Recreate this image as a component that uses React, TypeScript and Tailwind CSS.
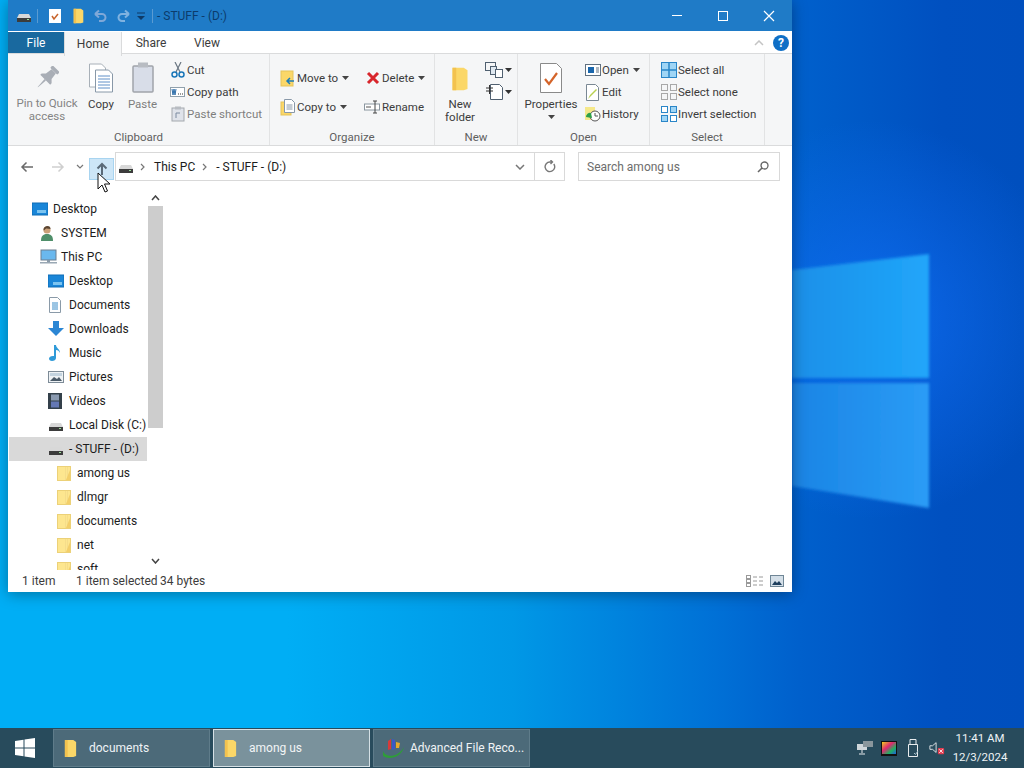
import React from "react";

const Folder = ({ s = 16 }: { s?: number }) => (
  <svg width={s} height={s} viewBox="0 0 16 16" className="shrink-0">
    <rect x="1.500" y="1.500" width="13" height="14" fill="#fde68f" stroke="#ecd178" />
    <path d="M9.500 2v13M11.500 2v13" stroke="#f0d88a" strokeWidth=".7" />
    <path d="M14 5v10h-4z" fill="#f3cf6a" />
  </svg>
);
const TallFolder = ({ w = 16, h = 20 }: { w?: number; h?: number }) => (
  <svg width={w} height={h} viewBox="0 0 16 20" className="shrink-0">
    <path d="M2 1h9l3 2v15l-3 1H2z" fill="#fbd768" />
    <path d="M2 1h3v18H2z" fill="#f3c24f" />
  </svg>
);
const Drive = () => (
  <svg width="16" height="16" viewBox="0 0 16 16" className="shrink-0">
    <path d="M3 6h10l2 4H1z" fill="#d8d8d8" />
    <rect x="1" y="10" width="14" height="4" fill="#3c3c3c" />
    <rect x="11" y="11" width="2" height="1" fill="#9be09b" />
  </svg>
);
const Monitor = () => (
  <svg width="16" height="16" viewBox="0 0 16 16" className="shrink-0">
    <rect x="0" y="2" width="16" height="12" fill="#1a86d8" />
    <rect x="0" y="2" width="16" height="12" fill="none" stroke="#0f6cb5" />
    <rect x="5" y="9" width="9" height="3" fill="#7cc4f0" />
  </svg>
);
const PC = () => (
  <svg width="18" height="16" viewBox="0 0 18 16" className="shrink-0">
    <rect x="1" y="1" width="15" height="10" fill="#6ab8ee" stroke="#6c7f90" />
    <rect x="7" y="11" width="3" height="2" fill="#8a9aa8" />
    <rect x="0" y="13" width="17" height="1.500" fill="#9aa8b4" />
  </svg>
);
const User = () => (
  <svg width="14" height="16" viewBox="0 0 14 16" className="shrink-0">
    <circle cx="7" cy="5" r="3.600" fill="#caa078" />
    <path d="M1 16c0-5 2-7 6-7s6 2 6 7z" fill="#4f8f6a" />
    <path d="M3.500 5c0-3 2-4 4-4 2 0 3 1 3 3-2 0-4-1-5 0-.5.5-1.500 2-2 1z" fill="#5b4632" />
  </svg>
);
const DocIcon = () => (
  <svg width="14" height="16" viewBox="0 0 14 16" className="shrink-0">
    <path d="M1.500.5h8l3 3v12h-11z" fill="#fff" stroke="#8a9aa8" />
    <path d="M4 6h6M4 8h6M4 10h6M4 12h6" stroke="#3a8cc8" />
  </svg>
);
const Down = () => (
  <svg width="16" height="16" viewBox="0 0 16 16" className="shrink-0">
    <path d="M5 0h6v7h5l-8 8-8-8h5z" fill="#2b86d4" />
  </svg>
);
const Music = () => (
  <svg width="14" height="16" viewBox="0 0 14 16" className="shrink-0">
    <path d="M6 0h2c0 3 4 4 4 8-1-2-2-3-4-3v8c0 2-2 3-4 3s-3-1-3-2.500 2-3 5-2.500z" fill="#2f9ad8" />
  </svg>
);
const Pic = () => (
  <svg width="16" height="14" viewBox="0 0 16 14" className="shrink-0">
    <rect x=".5" y="1.500" width="15" height="11" fill="#eef2f5" stroke="#7d8b97" />
    <path d="M2 11l4-4 3 2 2-2 3 4z" fill="#4a5a68" />
    <rect x="2" y="3" width="12" height="3" fill="#c3d3df" />
  </svg>
);
const Film = () => (
  <svg width="14" height="16" viewBox="0 0 14 16" className="shrink-0">
    <rect x="0" y="0" width="14" height="16" fill="#33404a" />
    <rect x="3" y="1.500" width="8" height="6" fill="#8a9ab0" />
    <rect x="3" y="8.500" width="8" height="6" fill="#6478b4" />
  </svg>
);

const Tree = ({ indent, icon, label, sel }: { indent: string; icon: React.ReactNode; label: string; sel?: boolean }) => (
  <div className={`flex items-center h-6 shrink-0 ${indent} ${sel ? "bg-[#d9d9d9]" : ""}`}>
    <span className="w-[21px] flex items-center shrink-0">{icon}</span>
    <span className="text-[#1c1c1c] whitespace-nowrap">{label}</span>
  </div>
);

const Caret = ({ c = "#444" }: { c?: string }) => (
  <svg width="7" height="4" viewBox="0 0 7 4" className="inline-block shrink-0">
    <path d="M0 0h7L3.500 4z" fill={c} />
  </svg>
);

const Group = ({ w, label, children }: { w: string; label: string; children: React.ReactNode }) => (
  <div className={`${w} flex flex-col shrink-0 h-full border-r border-[#e2e3e4]`}>
    <div className="flex-1 flex min-h-0">{children}</div>
    <div className="h-[14px] mb-[1px] leading-[14px] text-center text-[#5f5f5f]">{label}</div>
  </div>
);

const Small = ({ icon, label, dim, caret }: { icon: React.ReactNode; label: string; dim?: boolean; caret?: boolean }) => (
  <div className="flex items-center h-[22px] whitespace-nowrap">
    <span className="w-[17px] flex justify-center shrink-0 mr-[1px]">{icon}</span>
    <span className={dim ? "text-[#7e7e7e]" : "text-[#3c3c3c]"}>{label}</span>
    {caret && <span className="ml-[4px] flex"><Caret /></span>}
  </div>
);

export default function App() {
  return (
    <div className="relative w-[1024px] h-[768px] overflow-hidden bg-[radial-gradient(circle_at_870px_320px,rgba(16,110,245,0.8)_0px,rgba(16,110,245,0)_200px),linear-gradient(90deg,#00aef5_0%,#00aef5_28%,#0098e6_50%,#0070d6_70%,#0060cc_78%,#0050c0_92%,#004fbe_100%)] font-['Roboto','Liberation_Sans',sans-serif] text-[12px] leading-[14px]">
      {/* wallpaper light */}
      <svg className="absolute left-[792px] top-[240px]" width="160" height="280" viewBox="0 0 160 280">
        <defs>
          <filter id="bl"><feGaussianBlur stdDeviation="1.500" /></filter>
          <linearGradient id="pa" x1="0" y1="0" x2="1" y2="0"><stop offset="0" stopColor="#1c8fe8" /><stop offset="1" stopColor="#20a6fa" /></linearGradient>
          <linearGradient id="pb" x1="0" y1="0" x2="1" y2="0"><stop offset="0" stopColor="#1a84e4" /><stop offset="1" stopColor="#2a9cf6" /></linearGradient>
        </defs>
        <g filter="url(#bl)">
          <path d="M0 30L137 14V138H0z" fill="url(#pa)" />
          <path d="M0 143H137V268L0 246z" fill="url(#pb)" />
        </g>
      </svg>

      {/* window */}
      <div className="absolute left-2 top-0 w-[784px] h-[592px] flex flex-col bg-white shadow-[0_2px_14px_rgba(0,0,0,0.35)]">
        {/* title bar */}
        <div className="h-[31px] bg-[#1f7bc7] flex items-center shrink-0 pl-2 relative">
          <Drive />
          <div className="w-px h-[14px] bg-[#5a9bd2] ml-[5px]" />
          <svg width="14" height="16" viewBox="0 0 14 16" className="ml-[10px]">
            <path d="M1 1h12v14H1z" fill="#fff" />
            <path d="M4 8l2 3 4-5" fill="none" stroke="#c8642c" strokeWidth="1.500" />
          </svg>
          <span className="ml-[10px]"><TallFolder w={13} h={16} /></span>
          <svg width="16" height="14" viewBox="0 0 16 14" className="ml-[7px]">
            <path d="M3 5h7a3.500 3.500 0 010 7H7M3 5l4-3.500M3 5l4 3.500" fill="none" stroke="#7fa8d8" strokeWidth="2" />
          </svg>
          <svg width="16" height="14" viewBox="0 0 16 14" className="ml-[8px]">
            <path d="M13 5H6a3.500 3.500 0 000 7h3M13 5L9 1.500M13 5L9 8.500" fill="none" stroke="#7fb2e0" strokeWidth="2" />
          </svg>
          <svg width="10" height="10" viewBox="0 0 10 10" className="ml-[4px]">
            <path d="M1 2h8" stroke="#0f3a66" />
            <path d="M1 5h8L5 9z" fill="#0f3a66" />
          </svg>
          <div className="w-px h-[14px] bg-[#5a9bd2] ml-[6px]" />
          <span className="ml-[4px] text-[#0c3c6c] leading-none">- STUFF - (D:)</span>
          <div className="ml-auto flex items-center h-full">
            <div className="w-[46px] flex justify-center"><div className="w-[10px] h-px bg-white" /></div>
            <div className="w-[46px] flex justify-center"><div className="w-[10px] h-[10px] border border-white" /></div>
            <div className="w-[46px] flex justify-center">
              <svg width="12" height="12" viewBox="0 0 12 12"><path d="M1 1l10 10M11 1L1 11" stroke="#fff" strokeWidth="1.200" /></svg>
            </div>
          </div>
        </div>
        {/* tabs */}
        <div className="h-[23px] flex items-center shrink-0 border-b border-[#dadbdc] relative pt-[1px]">
          <div className="w-[56px] h-full bg-[#19699f] text-white flex items-center justify-center">File</div>
          <div className="w-[58px] h-[24px] bg-[#f5f6f7] border-x border-[#dadbdc] text-[#3c3c3c] flex items-center justify-center relative top-[1px]">Home</div>
          <div className="w-[58px] text-center text-[#3c3c3c]">Share</div>
          <div className="w-[54px] text-center text-[#3c3c3c]">View</div>
          <div className="ml-auto flex items-center pr-[3px] gap-[9px]">
            <svg width="10" height="6" viewBox="0 0 10 6"><path d="M1 5l4-4 4 4" fill="none" stroke="#c4c4c4" strokeWidth="1.500" /></svg>
            <div className="w-4 h-4 rounded-full bg-[#0f6fc6] text-white font-bold text-[12px] flex items-center justify-center">?</div>
          </div>
        </div>
        {/* ribbon */}
        <div className="h-[92px] bg-[#f5f6f7] border-b border-[#dadbdc] flex shrink-0 text-[11.5px] leading-[13px]">
          <Group w="w-[262px]" label="Clipboard">
            <div className="w-[78px] flex flex-col items-center pt-[12px] text-[#848484] text-center">
              <svg width="24" height="24" viewBox="0 0 24 24" className="mb-[4px]">
                <g transform="rotate(45 12 12)" fill="#a9aeb6">
                  <rect x="7" y="-1" width="10" height="3.500" rx="1" />
                  <path d="M9 2.500h6l1 7 3 3v2H5v-2l3-3z" />
                  <path d="M11 14.500h2L12.200 25h-.4z" />
                </g>
              </svg>
              <div className="mt-[3px] leading-[13px] whitespace-nowrap">Pin to Quick<br />access</div>
            </div>
            <div className="w-[30px] flex flex-col items-center pt-[9px] text-[#3c3c3c]">
              <svg width="26" height="30" viewBox="0 0 26 30">
                <path d="M1.500 1h12l4 4v19h-16z" fill="#fff" stroke="#a8b0b8" />
                <path d="M7.500 7h13l4 4v18h-17z" fill="#fff" stroke="#8898a8" />
                <path d="M10 13h12M10 16h12M10 19h12M10 22h12M10 25h12" stroke="#6090c8" />
              </svg>
              <div className="mt-[5px]">Copy</div>
            </div>
            <div className="w-[53px] flex flex-col items-center pt-[8px] text-[#7e7e7e]">
              <svg width="22" height="31" viewBox="0 0 22 31">
                <rect x="1" y="4" width="20" height="26" rx="1" fill="#d8dde8" stroke="#a0a4aa" strokeWidth="1.500" />
                <rect x="6" y="0.500" width="10" height="5" fill="#b8bcc2" />
              </svg>
              <div className="mt-[5px]">Paste</div>
            </div>
            <div className="flex flex-col pt-[5px]">
              <Small label="Cut" icon={<svg width="14" height="16" viewBox="0 0 14 16"><path d="M10 0L5 10M4 0l5 10" stroke="#6a7682" strokeWidth="1.200" /><circle cx="3.500" cy="12.500" r="2.500" fill="none" stroke="#1a76b8" strokeWidth="1.500" /><circle cx="10.500" cy="12.500" r="2.500" fill="none" stroke="#1a76b8" strokeWidth="1.500" /></svg>} />
              <Small label="Copy path" icon={<svg width="15" height="10" viewBox="0 0 15 10"><rect x=".5" y=".5" width="14" height="9" fill="#fff" stroke="#90a0ac" /><path d="M2 2l1 6 1-6 1 6 1-6" fill="none" stroke="#2c6ca8" /><path d="M8 7h1M10 7h1M12 7h1" stroke="#333" /></svg>} />
              <Small label="Paste shortcut" dim icon={<svg width="14" height="16" viewBox="0 0 14 16"><rect x="1" y="2" width="12" height="13" fill="#dfe3ea" stroke="#a4a8ae" /><rect x="4" y="0.500" width="6" height="3" fill="#b8bcc2" /><path d="M5 12V7h4" fill="none" stroke="#7a8aa0" /></svg>} />
            </div>
          </Group>
          <Group w="w-[165px]" label="Organize">
            <div className="flex flex-col pl-[9px] pt-[13px] gap-[7px] w-[94px]">
              <Small label="Move to" caret icon={<svg width="15" height="17" viewBox="0 0 15 17"><rect x="1" y="1" width="12" height="15" fill="#fbd768" stroke="#e5c35a" /><path d="M14 11H7M10 8l-3 3 3 3" fill="none" stroke="#1c7cb8" strokeWidth="1.500" /></svg>} />
              <Small label="Copy to" caret icon={<svg width="15" height="17" viewBox="0 0 15 17"><rect x="1" y="3" width="10" height="13" fill="#fbd768" stroke="#e5c35a" /><path d="M4.500.5h7l3 3v10h-10z" fill="#fff" stroke="#8898a8" /><path d="M6.500 6h6M6.500 8h6M6.500 10h6" stroke="#8898a8" /></svg>} />
            </div>
            <div className="flex flex-col pt-[13px] gap-[7px]">
              <Small label="Delete" caret icon={<svg width="14" height="14" viewBox="0 0 14 14"><path d="M2 2l10 10M12 2L2 12" stroke="#d8262c" strokeWidth="3" /></svg>} />
              <Small label="Rename" icon={<svg width="17" height="14" viewBox="0 0 17 14"><rect x=".5" y="4" width="15" height="6" fill="#fff" stroke="#8a96a0" /><path d="M2 7h5" stroke="#555" /><path d="M9 1h4M9 13h4M11 1v12" stroke="#444" /></svg>} />
            </div>
          </Group>
          <Group w="w-[83px]" label="New">
            <div className="w-[50px] flex flex-col items-center pt-[11px] text-[#3c3c3c] text-center">
              <TallFolder w={20} h={28} />
              <div className="mt-[5px]">New<br />folder</div>
            </div>
            <div className="flex flex-col pt-[5px] gap-0">
              <div className="h-[22px] flex items-center gap-[1px]">
                <svg width="19" height="16" viewBox="0 0 19 16"><rect x=".5" y=".5" width="10" height="8" fill="#f5f6f7" stroke="#506070" /><rect x="5.500" y="4.500" width="6" height="8" fill="#dfe8f0" stroke="#506070" /><rect x="10.500" y="7.500" width="7" height="8" fill="#fff" stroke="#506070" /></svg>
                <Caret c="#333" />
              </div>
              <div className="h-[22px] flex items-center gap-[1px]">
                <svg width="19" height="16" viewBox="0 0 19 16"><path d="M5.500.5h9l3 3v12h-12z" fill="#fff" stroke="#506070" /><path d="M1 4h7M1 7h7M4.500 1v9" stroke="#333" /></svg>
                <Caret c="#333" />
              </div>
            </div>
          </Group>
          <Group w="w-[132px]" label="Open">
            <div className="w-[66px] flex flex-col items-center pt-[9px] text-[#3c3c3c]">
              <svg width="22" height="30" viewBox="0 0 22 30"><path d="M.5.500h16l5 5v24H.5z" fill="#fff" stroke="#8a8a8a" /><path d="M5 16l4 5 8-11" fill="none" stroke="#d4642a" strokeWidth="2.200" /></svg>
              <div className="mt-[5px]">Properties</div>
              <div className="mt-[4px] flex"><Caret /></div>
            </div>
            <div className="flex flex-col pt-[5px]">
              <Small label="Open" caret icon={<svg width="16" height="12" viewBox="0 0 16 12"><rect x=".5" y=".5" width="15" height="11" fill="#fff" stroke="#607080" /><rect x="3" y="3" width="6" height="6" fill="#1a66ac" /><path d="M11 4h3M11 6h3M11 8h3" stroke="#607080" /></svg>} />
              <Small label="Edit" icon={<svg width="13" height="17" viewBox="0 0 13 17"><path d="M.5.500h9l3 3v13H.5z" fill="#fff" stroke="#7a8894" /><path d="M2 15l2-4 6-6 1 1-6 6z" fill="#b8d050" /></svg>} />
              <Small label="History" icon={<svg width="16" height="15" viewBox="0 0 16 15"><rect x="0" y="0" width="10" height="13" fill="#f5e88a" /><circle cx="10" cy="9" r="5" fill="#fff" stroke="#555" /><path d="M10 6v3h3" stroke="#555" fill="none" /><path d="M1 10a4 4 0 015-4l1 5z" fill="#2ea048" /></svg>} />
            </div>
          </Group>
          <Group w="w-[115px]" label="Select">
            <div className="flex flex-col pt-[5px] pl-[10px]">
              <Small label="Select all" icon={<svg width="16" height="16" viewBox="0 0 16 16"><rect x=".5" y=".5" width="15" height="15" fill="#9fd5f5" stroke="#2a86c8" /><path d="M8 0v16M0 8h16" stroke="#2a86c8" strokeWidth="1.500" /></svg>} />
              <Small label="Select none" icon={<svg width="16" height="16" viewBox="0 0 16 16"><g fill="none" stroke="#a8a8a8"><rect x=".5" y=".5" width="6" height="6" /><rect x="9.500" y=".5" width="6" height="6" /><rect x=".5" y="9.500" width="6" height="6" /><rect x="9.500" y="9.500" width="6" height="6" /></g></svg>} />
              <Small label="Invert selection" icon={<svg width="16" height="16" viewBox="0 0 16 16"><g stroke="#2a86c8"><rect x=".5" y=".5" width="6" height="6" fill="#fff" /><rect x="9.500" y=".5" width="6" height="6" fill="#9fd5f5" /><rect x=".5" y="9.500" width="6" height="6" fill="#9fd5f5" /><rect x="9.500" y="9.500" width="6" height="6" fill="#fff" /></g></svg>} />
            </div>
          </Group>
        </div>
        {/* address */}
        <div className="h-[44px] flex items-center shrink-0 relative pb-[3px]">
          <svg width="14" height="12" viewBox="0 0 14 12" className="ml-[12px]"><path d="M13 6H2M6.500 1.500L2 6l4.500 4.500" fill="none" stroke="#6a6a6a" strokeWidth="1.500" /></svg>
          <svg width="14" height="12" viewBox="0 0 14 12" className="ml-[17px]"><path d="M1 6h11M7.500 1.500L12 6l-4.500 4.500" fill="none" stroke="#cfcfcf" strokeWidth="1.500" /></svg>
          <svg width="8" height="5" viewBox="0 0 8 5" className="ml-[11px]"><path d="M1 1l3 3 3-3" fill="none" stroke="#777" strokeWidth="1.200" /></svg>
          <div className="ml-[5px] mt-[4px] w-[25px] h-[22px] bg-[#cde6f7] border border-[#a8d4f0] flex items-center justify-center">
            <svg width="12" height="14" viewBox="0 0 12 14"><path d="M6 13V2M1.500 6.500L6 2l4.500 4.500" fill="none" stroke="#5a6a78" strokeWidth="2" /></svg>
          </div>
          <div className="ml-[1px] w-[450px] h-[29px] border border-[#d9d9d9] flex items-center text-[#1c1c1c]">
            <span className="ml-[2px]"><Drive /></span>
            <svg width="5" height="8" viewBox="0 0 5 8" className="ml-[6px]"><path d="M1 1l3 3-3 3" fill="none" stroke="#777" strokeWidth="1.200" /></svg>
            <span className="ml-[9px]">This PC</span>
            <svg width="5" height="8" viewBox="0 0 5 8" className="ml-[7px]"><path d="M1 1l3 3-3 3" fill="none" stroke="#777" strokeWidth="1.200" /></svg>
            <span className="ml-[9px]">- STUFF - (D:)</span>
            <div className="ml-auto flex items-center h-full">
              <svg width="10" height="6" viewBox="0 0 10 6" className="mr-[9px]"><path d="M1 1l4 4 4-4" fill="none" stroke="#777" strokeWidth="1.500" /></svg>
              <div className="w-[30px] h-full border-l border-[#d9d9d9] flex items-center justify-center">
                <svg width="12" height="13" viewBox="0 0 12 13"><path d="M9.800 4A4.800 4.800 0 1 1 6 2H8M6.500 0L8.500 2 6.500 4" fill="none" stroke="#777" strokeWidth="1.400" /></svg>
              </div>
            </div>
          </div>
          <div className="ml-[13px] w-[202px] h-[29px] border border-[#d9d9d9] flex items-center pl-2 pr-[10px] text-[#6d6d6d]">
            <span>Search among us</span>
            <svg width="12" height="12" viewBox="0 0 12 12" className="ml-auto"><circle cx="7.500" cy="4.500" r="3.500" fill="none" stroke="#666" strokeWidth="1.300" /><path d="M5 7l-4 4" stroke="#666" strokeWidth="1.600" /></svg>
          </div>
          <svg width="14" height="22" viewBox="0 0 14 22" className="absolute left-[89px] top-[26px]">
            <path d="M1 1v16l4-4 3 7 2.500-1-3-7h5.500z" fill="#fff" stroke="#111" />
          </svg>
        </div>
        {/* body */}
        <div className="flex-1 min-h-0 flex">
          <div className="w-[155px] shrink-0 flex relative">
            <div className="w-[139px] overflow-hidden flex flex-col pt-[7px] pl-[1px]">
              <Tree indent="pl-[23px]" icon={<Monitor />} label="Desktop" />
              <Tree indent="pl-[31px]" icon={<User />} label="SYSTEM" />
              <Tree indent="pl-[31px]" icon={<PC />} label="This PC" />
              <Tree indent="pl-[39px]" icon={<Monitor />} label="Desktop" />
              <Tree indent="pl-[39px]" icon={<DocIcon />} label="Documents" />
              <Tree indent="pl-[39px]" icon={<Down />} label="Downloads" />
              <Tree indent="pl-[39px]" icon={<Music />} label="Music" />
              <Tree indent="pl-[39px]" icon={<Pic />} label="Pictures" />
              <Tree indent="pl-[39px]" icon={<Film />} label="Videos" />
              <Tree indent="pl-[39px]" icon={<Drive />} label="Local Disk (C:)" />
              <Tree indent="pl-[39px]" icon={<Drive />} label="- STUFF - (D:)" sel />
              <Tree indent="pl-[47px]" icon={<Folder />} label="among us" />
              <Tree indent="pl-[47px]" icon={<Folder />} label="dlmgr" />
              <Tree indent="pl-[47px]" icon={<Folder />} label="documents" />
              <Tree indent="pl-[47px]" icon={<Folder />} label="net" />
              <Tree indent="pl-[47px]" icon={<Folder />} label="soft" />
            </div>
            <div className="w-[15px] ml-auto flex flex-col bg-white pb-[1px]">
              <div className="h-[16px] flex items-center justify-center">
                <svg width="9" height="6" viewBox="0 0 9 6"><path d="M1 5l3.500-4L8 5" fill="none" stroke="#444" strokeWidth="1.500" /></svg>
              </div>
              <div className="h-[222px] bg-[#cdcdcd]" />
              <div className="flex-1" />
              <div className="h-[16px] flex items-center justify-center">
                <svg width="9" height="6" viewBox="0 0 9 6"><path d="M1 1l3.500 4L8 1" fill="none" stroke="#444" strokeWidth="1.500" /></svg>
              </div>
            </div>
          </div>
          <div className="flex-1" />
        </div>
        {/* status */}
        <div className="h-[22px] shrink-0 flex items-center text-[#3c3c3c] pl-[14px] pr-2">
          <span className="w-[54px]">1 item</span>
          <span className="w-[84px]">1 item selected</span>
          <span>34 bytes</span>
          <div className="ml-auto flex items-center gap-[6px]">
            <svg width="18" height="12" viewBox="0 0 18 12"><g fill="none" stroke="#9a9a9a"><rect x=".5" y=".5" width="4" height="3" /><rect x=".5" y="4.500" width="4" height="3" /><rect x=".5" y="8.500" width="4" height="3" /></g><path d="M7 2h4M13 2h4M7 6h4M13 6h4M7 10h4M13 10h4" stroke="#9a9a9a" /></svg>
            <svg width="14" height="12" viewBox="0 0 14 12"><rect x=".5" y=".5" width="13" height="11" fill="#d4dfe8" stroke="#6f8696" /><path d="M2 10l3-4 2 2 2-2 3 4z" fill="#1f3f5e" /></svg>
          </div>
        </div>
      </div>

      {/* taskbar */}
      <div className="absolute left-0 right-0 bottom-0 h-10 bg-[#284b5c] flex items-stretch text-white">
        <div className="w-[49px] mr-[1px] flex items-center justify-center shrink-0">
          <svg width="20" height="20" viewBox="0 0 20 20"><path d="M0 3l8.500-1.200V9.500H0zM9.500 1.600L20 0v9.500H9.500zM0 10.500h8.500v7.700L0 17zM9.500 10.500H20V20l-10.500-1.600z" fill="#fff" /></svg>
        </div>
        <div className="ml-[3px] w-[157px] my-[1px] bg-[#4c6a79] border border-[#5f7c8a] flex items-center pl-[9px] gap-[11px] shrink-0">
          <TallFolder w={15} h={19} /><span className="text-[#eef3f6]">documents</span>
        </div>
        <div className="ml-[3px] w-[157px] my-[1px] bg-[#7a929c] border border-[#d5e0e5] flex items-center pl-[9px] gap-[11px] shrink-0">
          <TallFolder w={15} h={19} /><span className="text-[#f2f5f6]">among us</span>
        </div>
        <div className="ml-[3px] w-[157px] my-[1px] bg-[#4c6a79] border border-[#5f7c8a] flex items-center pl-[7px] gap-[5px] shrink-0">
          <svg width="24" height="24" viewBox="0 0 24 24" className="shrink-0">
            <path d="M2 15c2 6 14 8 21-4-3 11-15 13-21 9z" fill="#2e9e38" />
            <path d="M7 14V5l3-2v10z" fill="#d83a3a" />
            <path d="M11 14V3l3 1v9z" fill="#3a58c8" />
            <path d="M15 12V6l4 1-1 5z" fill="#e8a82c" />
          </svg>
          <span className="text-[#f0f4f6] whitespace-nowrap">Advanced File Reco...</span>
        </div>
        <div className="ml-auto flex items-center shrink-0">
          <svg width="16" height="14" viewBox="0 0 16 14" className="mr-[8px]"><rect x="0" y="3" width="10" height="6" fill="#cfd6da" /><rect x="6" y="0" width="10" height="6" fill="#8a969c" /><path d="M5 9v3M2 13h6" stroke="#e8ecee" /></svg>
          <svg width="16" height="15" viewBox="0 0 16 15" className="mr-[10px]">
            <defs><linearGradient id="cc" x1="0" y1="0" x2="1" y2="1"><stop offset="0" stopColor="#f0d020" /><stop offset=".4" stopColor="#e02870" /><stop offset=".7" stopColor="#20b060" /><stop offset="1" stopColor="#2060e0" /></linearGradient></defs>
            <rect width="16" height="15" fill="#111" /><rect x="1" y="1" width="14" height="12" fill="url(#cc)" />
          </svg>
          <svg width="12" height="18" viewBox="0 0 12 18" className="mr-[10px]"><path d="M3 .5h6v5H3zM1.500 5.500h9v12h-9z" fill="none" stroke="#e8ecee" /><path d="M7 14l1.500 1.500L11 12" fill="none" stroke="#a8c0cc" /></svg>
          <svg width="16" height="14" viewBox="0 0 18 14" className="mr-[2px]"><path d="M1 4.500h3L8 1v11L4 8.500H1z" fill="none" stroke="#e8ecee" /><rect x="10" y="7" width="7" height="7" rx="1" fill="#e03c50" /><path d="M11.500 8.500l4 4M15.500 8.500l-4 4" stroke="#fff" /></svg>
          <div className="w-[66px] text-center text-[11.5px] leading-[19px] text-[#eef3f6] mr-[11px]">11:41 AM<br />12/3/2024</div>
        </div>
      </div>
    </div>
  );
}
